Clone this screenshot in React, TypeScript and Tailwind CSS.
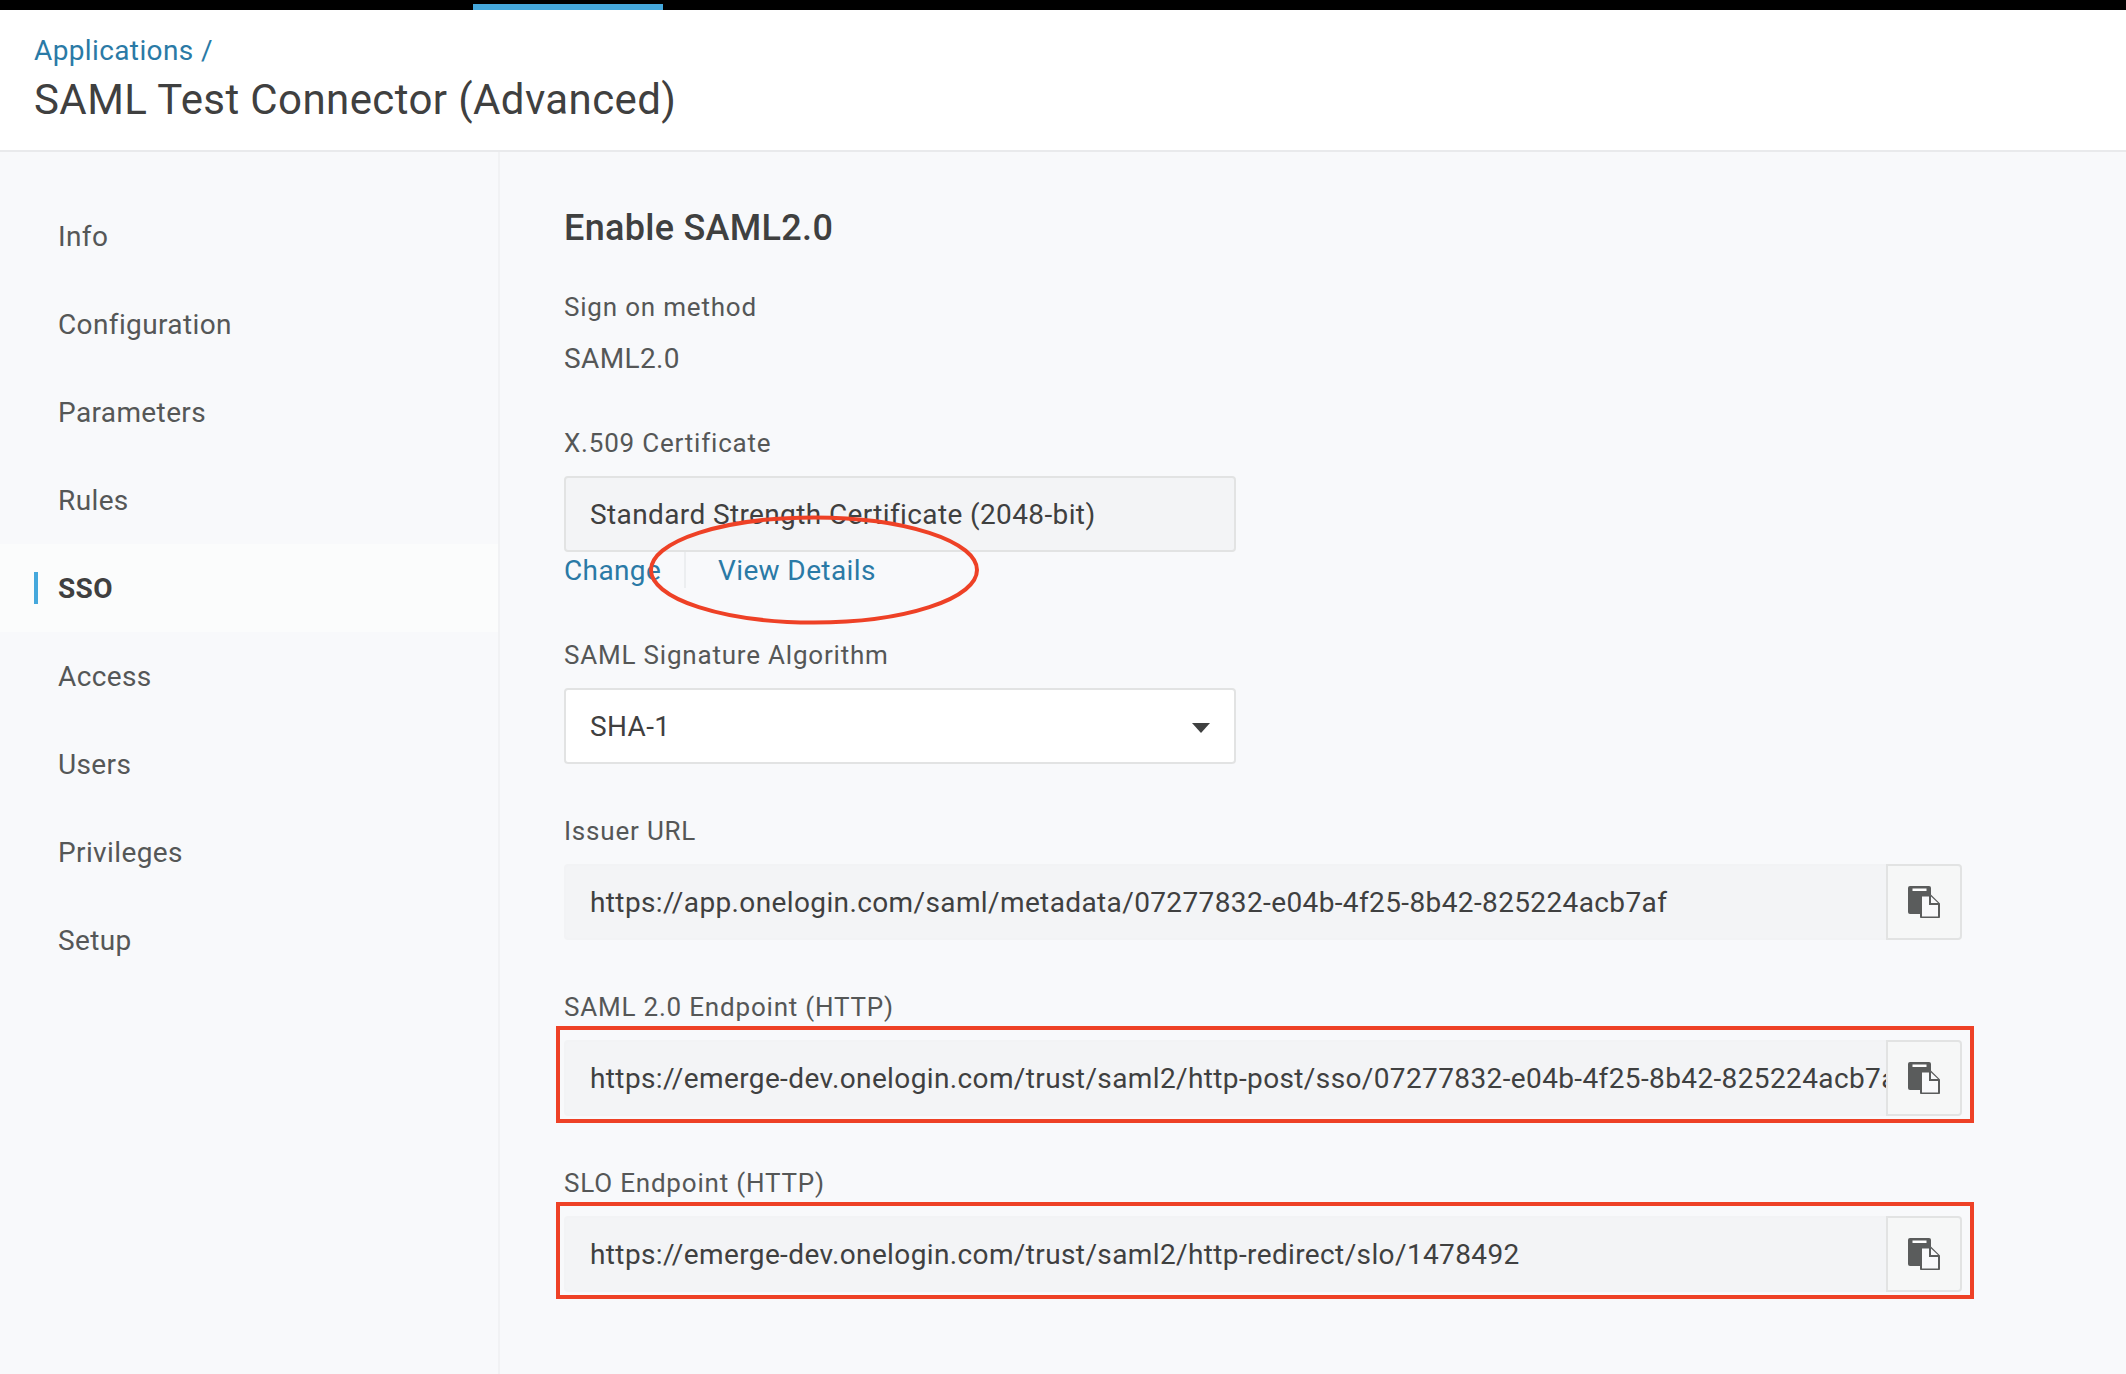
const navItems = ["Info", "Configuration", "Parameters", "Rules", "SSO", "Access", "Users", "Privileges", "Setup"];

function CopyIcon() {
  return (
    <svg width="32" height="32" viewBox="0 0 32 32">
      <path d="M2 0h19a2 2 0 0 1 2 2v26H2a2 2 0 0 1-2-2V2a2 2 0 0 1 2-2z" fill="#5a5c5c" />
      <rect x="4.5" y="2.5" width="14" height="2.5" fill="#ffffff" />
      <path d="M13 9.5h9.5l8.5 8.5v12.5a1 1 0 0 1-1 1H14a1 1 0 0 1-1-1z" fill="#f8f9fb" stroke="#5a5c5c" strokeWidth="2" />
      <path d="M22 9.5v8.5h9" fill="#f8f9fb" stroke="#5a5c5c" strokeWidth="2" />
    </svg>
  );
}

function CopyField({ label, value, marked }: { label: string; value: string; marked?: boolean }) {
  return (
    <div className="mt-12 w-[1398px]">
      <p className="h-9 text-[26px] leading-[38px] tracking-[0.8px] text-[#555757]">{label}</p>
      <div className="relative mt-4 flex h-[76px]">
        <div className="min-w-0 flex-1 overflow-hidden whitespace-nowrap rounded-l border-2 border-r-0 border-[#f2f3f5] bg-[#f3f4f6] pl-6 text-[28px] leading-[74px] tracking-[0.38px] text-[#3f4040]">
          {value}
        </div>
        <button className="flex w-[76px] items-center justify-center rounded-r border-2 border-[#e2e3e3] bg-[#f6f7f7]">
          <CopyIcon />
        </button>
        {marked && (
          <div className="absolute -top-[14px] -bottom-[7px] -left-2 -right-3 border-4 border-[#ee4126]" />
        )}
      </div>
    </div>
  );
}

export default function App() {
  return (
    <div className="flex h-[1374px] w-full flex-col overflow-hidden bg-[#f8f9fb] font-['Roboto',sans-serif]">
      {/* Top bar */}
      <div className="h-[10px] shrink-0 bg-black pl-[473px] pt-1">
        <div className="h-[6px] w-[190px] bg-[#45a8dc]" />
      </div>

      {/* Header */}
      <header className="h-[142px] shrink-0 border-b-2 border-[#e9eaec] bg-white px-[34px] pt-[21px]">
        <p className="h-10 text-[28px] leading-10 tracking-[0.38px] text-[#2a7aa6]">Applications /</p>
        <h1 className="mt-[1px] text-[42px] leading-[56px] tracking-[0.4px] text-[#3f4040]">SAML Test Connector (Advanced)</h1>
      </header>

      <div className="flex min-h-0 flex-1">
        {/* Sidebar */}
        <aside className="w-[500px] shrink-0 border-r-2 border-[#f1f2f4] pt-10">
          <nav>
            {navItems.map((item) => {
              const active = item === "SSO";
              return (
                <div
                  key={item}
                  className={`flex h-[88px] items-center pl-[34px] text-[28px] tracking-[0.38px] ${
                    active ? "bg-[#fbfcfc] font-bold text-[#3f4040]" : "text-[#555757]"
                  }`}
                >
                  <span className={`mr-5 h-8 w-1 ${active ? "bg-[#45a8dc]" : ""}`} />
                  <span className="pt-0.5">{item}</span>
                </div>
              );
            })}
          </nav>
        </aside>

        {/* Content */}
        <main className="min-w-0 flex-1 pl-[64px] pt-[53px]">
          <h2 className="h-11 text-[36px] font-medium leading-[46px] tracking-[0.3px] text-[#3f4040]">Enable SAML2.0</h2>

          <p className="mt-[39px] h-9 text-[26px] leading-[38px] tracking-[0.8px] text-[#555757]">Sign on method</p>
          <p className="mt-4 h-9 text-[28px] leading-[38px] tracking-[0.38px] text-[#555757]">SAML2.0</p>

          <p className="mt-12 h-9 text-[26px] leading-[38px] tracking-[0.8px] text-[#555757]">X.509 Certificate</p>
          <div className="relative mt-4 w-[672px]">
            <div className="h-[76px] rounded border-2 border-[#e2e3e3] bg-[#f3f4f6] pl-6 text-[28px] leading-[74px] tracking-[0.38px] text-[#3f4040]">
              Standard Strength Certificate (2048-bit)
            </div>
            <div className="flex h-9 text-[28px] tracking-[0.38px] text-[#2a7aa6]">
              <span className="w-[122px] border-r-2 border-[#eceef0] leading-[38px]">Change</span>
              <span className="pl-8 leading-[38px]">View Details</span>
            </div>
            {/* Annotation ellipse */}
            <svg className="absolute left-[84px] top-[39px]" width="334" height="110" viewBox="0 0 334 110" fill="none">
              <ellipse cx="166" cy="55" rx="163" ry="52.5" stroke="#ee4126" strokeWidth="4" />
            </svg>
          </div>

          <p className="mt-12 h-9 text-[26px] leading-[38px] tracking-[0.8px] text-[#555757]">SAML Signature Algorithm</p>
          <div className="mt-4 flex h-[76px] w-[672px] items-center justify-between rounded border-2 border-[#e2e3e3] bg-white pl-6 pr-[24px] text-[28px] tracking-[0.38px] text-[#3f4040]">
            <span className="pt-0.5">SHA-1</span>
            <span className="mt-1 h-0 w-0 border-x-[9px] border-t-[10px] border-x-transparent border-t-[#3f4040]" />
          </div>

          <CopyField label="Issuer URL" value="https://app.onelogin.com/saml/metadata/07277832-e04b-4f25-8b42-825224acb7af" />
          <CopyField label="SAML 2.0 Endpoint (HTTP)" value="https://emerge-dev.onelogin.com/trust/saml2/http-post/sso/07277832-e04b-4f25-8b42-825224acb7af" marked />
          <CopyField label="SLO Endpoint (HTTP)" value="https://emerge-dev.onelogin.com/trust/saml2/http-redirect/slo/1478492" marked />
        </main>
      </div>
    </div>
  );
}
